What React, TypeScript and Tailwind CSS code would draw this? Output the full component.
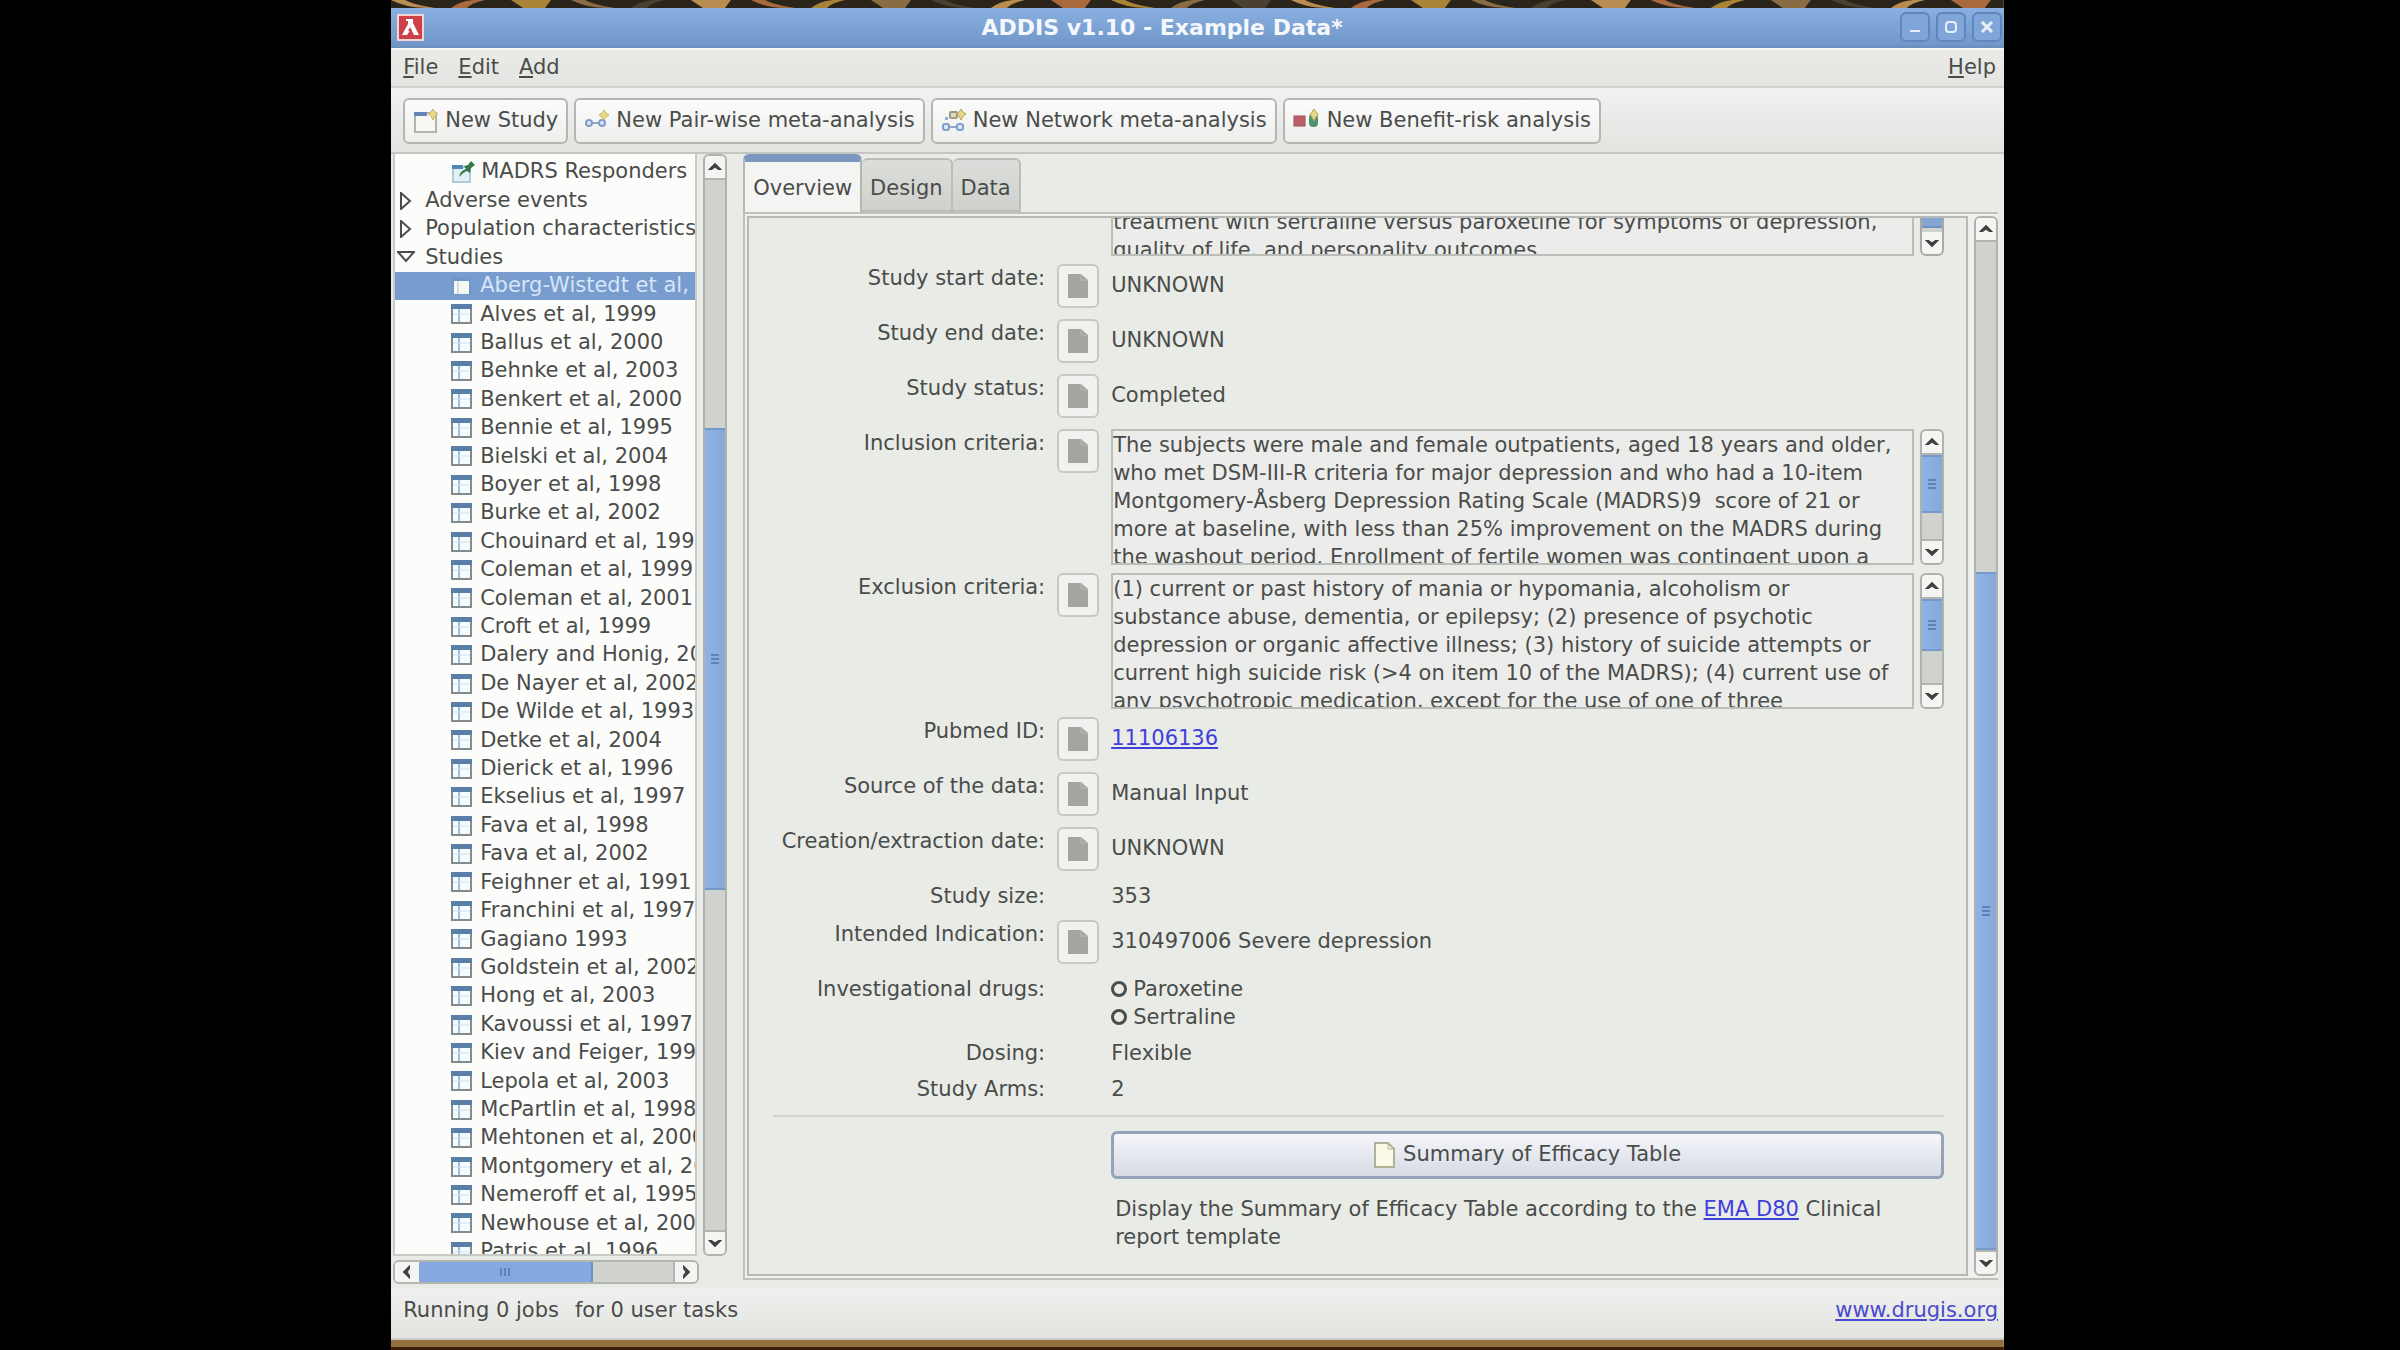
import React from "react";

type ScrollProps = { label: string; before: string; thumb: string; after: string };

function Chevron({ dir }: { dir: "up" | "down" | "left" | "right" }) {
  const d = {
    up: "M1 8 L6 3 L11 8 L9 8 L6 6 L3 8 Z",
    down: "M1 4 L6 9 L11 4 L9 4 L6 6 L3 4 Z",
    left: "M8 1 L3 6 L8 11 L8 9 L6 6 L8 3 Z",
    right: "M4 1 L9 6 L4 11 L4 9 L6 6 L4 3 Z",
  }[dir];
  return (
    <svg viewBox="0 0 12 12" className="h-3.5 w-3.5" aria-hidden="true">
      <path d={d} fill="#3f413f" stroke="#3f413f" strokeWidth="1" />
    </svg>
  );
}

function VScroll({ label, before, thumb, after }: ScrollProps) {
  return (
    <div aria-label={label} role="group" className="flex w-6 shrink-0 flex-col overflow-hidden rounded-md border-2 border-[#b0b2ae] bg-[#d0d2ce]">
      <button aria-label={`${label} up`} className="flex h-6 shrink-0 items-center justify-center border-b-2 border-[#b3b5b1] bg-[#f4f5f3]">
        <Chevron dir="up" />
      </button>
      <div className={before} />
      <div className={`${thumb} -mx-0.5 flex flex-col items-center justify-center gap-0.5 border-2 border-[#7599ca] bg-linear-to-r from-[#8fb3e6] to-[#86a9d8]`}>
        <span className="h-0.5 w-2 bg-[#5f83b8]" />
        <span className="h-0.5 w-2 bg-[#5f83b8]" />
        <span className="h-0.5 w-2 bg-[#5f83b8]" />
      </div>
      <div className={after} />
      <button aria-label={`${label} down`} className="flex h-6 shrink-0 items-center justify-center border-t-2 border-[#b3b5b1] bg-[#f4f5f3]">
        <Chevron dir="down" />
      </button>
    </div>
  );
}

function TableIcon() {
  return (
    <svg viewBox="0 0 21 20" className="h-5 w-[21px] shrink-0" aria-hidden="true">
      <rect x="1" y="1" width="19" height="18" fill="#f4fbff" stroke="#84898a" strokeWidth="2" />
      <rect x="0" y="0" width="21" height="5" fill="#5a7fa6" />
      <path d="M8 5 V18" stroke="#9cc0dc" strokeWidth="2" />
      <path d="M2 10 H19" stroke="#cfe3f0" strokeWidth="1" />
    </svg>
  );
}

function SelectedTableIcon() {
  return (
    <svg viewBox="0 0 21 20" className="h-5 w-[21px] shrink-0" aria-hidden="true">
      <rect x="1" y="1" width="19" height="18" fill="#6f97c8" />
      <rect x="3" y="5" width="15" height="13" fill="#f6faf4" />
      <path d="M7 5 V18" stroke="#a9c4d8" strokeWidth="1" />
    </svg>
  );
}

function ResponderIcon() {
  return (
    <svg viewBox="0 0 26 24" className="h-6 w-[26px] shrink-0" aria-hidden="true">
      <rect x="2" y="7" width="17" height="15" fill="#dff0f7" stroke="#b3c9da" strokeWidth="2" />
      <rect x="1" y="5" width="11" height="4" fill="#4f86b5" />
      <path d="M8 17 C9 12 12 10 15 9 L13 6 L17 5 L20 1 L24 5 L20 8 L19 13 L16 11 C13 12 11 14 8 17 Z" fill="#35784a" />
    </svg>
  );
}

function NewStudyIcon() {
  return (
    <svg viewBox="0 0 26 26" className="h-[26px] w-[26px]" aria-hidden="true">
      <rect x="2" y="5" width="21" height="19" fill="#f7f8f4" stroke="#b3b4a9" strokeWidth="2" />
      <rect x="1" y="4" width="13" height="4" fill="#6585bd" />
      <path d="M20 1 L22 4 L25 6 L22 8 L20 12 L18 8 L15 6 L18 4 Z" fill="#e6d885" stroke="#c9b769" strokeWidth="1" />
    </svg>
  );
}

function PairIcon() {
  return (
    <svg viewBox="0 0 26 26" className="h-[26px] w-[26px]" aria-hidden="true">
      <path d="M8 15 H16" stroke="#8fa6c6" strokeWidth="2" />
      <circle cx="5" cy="15" r="3" fill="#dbe8f6" stroke="#7f9ecb" strokeWidth="2" />
      <circle cx="18" cy="15" r="3" fill="#dbe8f6" stroke="#7f9ecb" strokeWidth="2" />
      <path d="M20 2 L22 5 L25 7 L22 9 L20 12 L18 9 L15 7 L18 5 Z" fill="#e6d885" stroke="#c9b769" strokeWidth="1" />
    </svg>
  );
}

function NetworkIcon() {
  return (
    <svg viewBox="0 0 26 26" className="h-[26px] w-[26px]" aria-hidden="true">
      <path d="M7 19 H17" stroke="#8fa6c6" strokeWidth="2" />
      <rect x="2" y="16" width="6" height="6" rx="2" fill="#dbe8f6" stroke="#7f9ecb" strokeWidth="2" />
      <rect x="16" y="16" width="6" height="6" rx="2" fill="#dbe8f6" stroke="#7f9ecb" strokeWidth="2" />
      <rect x="4" y="9" width="3" height="3" fill="#8fb0da" />
      <rect x="9" y="4" width="7" height="6" rx="1" fill="#d9d9c4" stroke="#9c9a80" strokeWidth="2" />
      <path d="M20 1 L22 4 L25 6 L22 8 L20 12 L18 8 L16 6 L18 4 Z" fill="#e6d885" stroke="#b5a45c" strokeWidth="1" />
    </svg>
  );
}

function BenefitIcon() {
  return (
    <svg viewBox="0 0 28 26" className="h-[26px] w-7" aria-hidden="true">
      <rect x="1" y="8" width="11" height="10" fill="#bb6068" stroke="#9d4d55" strokeWidth="1" />
      <rect x="16" y="6" width="9" height="13" rx="4" fill="#4f9470" />
      <path d="M21 1 L23 4 L25 6 L23 9 L21 13 L19 9 L17 6 L19 4 Z" fill="#e6d885" stroke="#b5a45c" strokeWidth="1" />
    </svg>
  );
}

function DocIcon() {
  return (
    <svg viewBox="0 0 20 24" className="h-6 w-5" aria-hidden="true">
      <path d="M0 0 H13 L20 6 V24 H0 Z" fill="#a3a5a1" />
      <path d="M13 0 V6 H20" fill="none" stroke="#b9bbb7" strokeWidth="1" />
    </svg>
  );
}

function PageIcon() {
  return (
    <svg viewBox="0 0 21 26" className="h-[26px] w-[21px]" aria-hidden="true">
      <path d="M1 1 H14 L20 7 V25 H1 Z" fill="#fbfae6" stroke="#b2b195" strokeWidth="2" />
      <path d="M14 1 V7 H20" fill="none" stroke="#b2b195" strokeWidth="1" />
    </svg>
  );
}

function Wallpaper({ bottom }: { bottom?: boolean }) {
  const xs = Array.from({ length: 27 }, (_, i) => i * 60);
  return (
    <svg viewBox="0 0 1613 10" preserveAspectRatio="none" className={bottom ? "h-2.5 w-full shrink-0" : "h-2 w-full shrink-0"} aria-hidden="true">
      <rect width="1613" height="10" fill={bottom ? "#94703f" : "#2b241b"} />
      {!bottom &&
        xs.map((x, i) => (
          <path
            key={x}
            d={i % 3 === 0 ? `M${x} 0 q14 9 34 10 l10 0 q-22 -4 -30 -10 Z` : i % 3 === 1 ? `M${x} 10 q8 -8 22 -10 h12 q-14 4 -18 10 Z` : `M${x} 0 h40 l-6 10 h-22 Z`}
            fill={["#b98d52", "#a8693c", "#a98438", "#8a6c42", "#4a4030"][i % 5]}
          />
        ))}
      {bottom && <rect y="7" width="1613" height="3" fill="#3d1d0c" />}
    </svg>
  );
}

const studies = [
  "Alves et al, 1999", "Ballus et al, 2000", "Behnke et al, 2003", "Benkert et al, 2000", "Bennie et al, 1995",
  "Bielski et al, 2004", "Boyer et al, 1998", "Burke et al, 2002", "Chouinard et al, 1999", "Coleman et al, 1999",
  "Coleman et al, 2001", "Croft et al, 1999", "Dalery and Honig, 2003", "De Nayer et al, 2002", "De Wilde et al, 1993",
  "Detke et al, 2004", "Dierick et al, 1996", "Ekselius et al, 1997", "Fava et al, 1998", "Fava et al, 2002",
  "Feighner et al, 1991", "Franchini et al, 1997", "Gagiano 1993", "Goldstein et al, 2002", "Hong et al, 2003",
  "Kavoussi et al, 1997", "Kiev and Feiger, 1997", "Lepola et al, 2003", "McPartlin et al, 1998",
  "Mehtonen et al, 2000", "Montgomery et al, 2004", "Nemeroff et al, 1995", "Newhouse et al, 2000", "Patris et al, 1996",
];

const inclusion = `The subjects were male and female outpatients, aged 18 years and older,
who met DSM-III-R criteria for major depression and who had a 10-item
Montgomery-Åsberg Depression Rating Scale (MADRS)9  score of 21 or
more at baseline, with less than 25% improvement on the MADRS during
the washout period. Enrollment of fertile women was contingent upon a`;

const exclusion = `(1) current or past history of mania or hypomania, alcoholism or
substance abuse, dementia, or epilepsy; (2) presence of psychotic
depression or organic affective illness; (3) history of suicide attempts or
current high suicide risk (>4 on item 10 of the MADRS); (4) current use of
any psychotropic medication, except for the use of one of three`;

function Branch({ open, children }: { open?: boolean; children: React.ReactNode }) {
  return (
    <li className="flex items-center gap-2.5 pl-0.5 whitespace-nowrap">
      <svg viewBox="0 0 18 18" className="h-[18px] w-[18px] shrink-0" aria-hidden="true">
        <path d={open ? "M1 4 H17 L9 13 Z" : "M4 1 L13 9 L4 17 Z"} fill="#fdfdfc" stroke="#4b4d4b" strokeWidth="2" />
      </svg>
      {children}
    </li>
  );
}

function ToolButton({ icon, children }: { icon: React.ReactNode; children: React.ReactNode }) {
  return (
    <button className="flex h-[46px] items-center gap-1.5 rounded-md border-2 border-[#b4b6b2] bg-linear-to-b from-[#fbfbfb] to-[#eeefed] px-2 whitespace-nowrap">
      {icon}
      {children}
    </button>
  );
}

function NoteButton({ label }: { label: string }) {
  return (
    <button aria-label={`Notes for ${label}`} className="flex h-11 w-[42px] items-center justify-center rounded-md border-2 border-[#c6c8c4] bg-[#f1f2f0]">
      <DocIcon />
    </button>
  );
}

function Row({ label, children }: { label: string; children: React.ReactNode }) {
  return (
    <div className="col-span-3 grid grid-cols-subgrid">
      <dt className="text-right leading-7 whitespace-nowrap">{label}:</dt>
      <dd>
        <NoteButton label={label} />
      </dd>
      <dd className="flex min-w-0 items-center">{children}</dd>
    </div>
  );
}

function PlainRow({ label, children }: { label: string; children: React.ReactNode }) {
  return (
    <div className="col-span-3 grid grid-cols-subgrid leading-7">
      <dt className="text-right whitespace-nowrap">{label}:</dt>
      <dd />
      <dd>{children}</dd>
    </div>
  );
}

function CriteriaRow({ label, text, thumb }: { label: string; text: string; thumb: string }) {
  const id = label.split(" ")[0].toLowerCase();
  return (
    <div className="col-span-3 grid grid-cols-subgrid">
      <dt className="text-right leading-7">
        <label htmlFor={id}>{label}:</label>
      </dt>
      <dd>
        <NoteButton label={label} />
      </dd>
      <dd className="flex h-[136px] gap-1.5">
        <textarea
          id={id}
          readOnly
          value={text}
          className="min-w-0 flex-1 resize-none overflow-hidden border-2 border-[#bbbdb9] bg-[#ecedea] leading-7 whitespace-pre outline-none"
        />
        <VScroll label={label} before="" thumb={thumb} after="flex-1" />
      </dd>
    </div>
  );
}

function TitleButton({ label, children }: { label: string; children: React.ReactNode }) {
  return (
    <button aria-label={label} className="flex h-[30px] w-[30px] items-center justify-center rounded-md border-2 border-[#5f86bd] bg-[#80a5d8]">
      <svg viewBox="0 0 16 16" className="h-4 w-4" fill="none" stroke="#e6effa" strokeWidth="2" aria-hidden="true">
        {children}
      </svg>
    </button>
  );
}

export default function App() {
  return (
    <div className="h-screen overflow-hidden bg-black font-['DejaVu_Sans',sans-serif] text-[21px] text-[#4a4c4a]">
      <div className="mr-[16.5%] ml-[16.3%] flex h-full flex-col bg-[#e9ebe7]">
        <Wallpaper />
        <header className="flex h-10 shrink-0 items-center border-b-2 border-[#6a8fbe] bg-linear-to-b from-[#8aafe0] to-[#7097c9] pr-0.5 pl-1.5">
          <svg viewBox="0 0 27 27" className="h-[27px] w-[27px]" aria-hidden="true">
            <rect x="1" y="1" width="25" height="25" fill="#cd4249" stroke="#f3d5d8" strokeWidth="2" />
            <path d="M5 21 L11 10 V7 H9 V5 H16 V9 L22 21 H17 L14 15 L10 21 Z" fill="#fff" />
            <path d="M13 13 L11 17 H15 Z" fill="#cd4249" />
          </svg>
          <h1 className="flex-1 text-center text-[22px] font-bold text-[#f4f8fd]">ADDIS v1.10 - Example Data*</h1>
          <div className="flex gap-1.5">
            <TitleButton label="Minimize"><path d="M3 12 H13" /></TitleButton>
            <TitleButton label="Maximize"><rect x="3" y="3" width="10" height="10" rx="3" /></TitleButton>
            <TitleButton label="Close"><path d="M3 3 L13 13 M13 3 L3 13" strokeWidth="3" /></TitleButton>
          </div>
        </header>
        <nav className="flex h-10 shrink-0 items-center gap-5 border-t-2 border-b-2 border-t-[#f6f8f8] border-b-[#cfd1cd] bg-linear-to-b from-[#ebebe6] to-[#e3e5e2] pr-2 pl-3">
          <button><u>F</u>ile</button>
          <button><u>E</u>dit</button>
          <button><u>A</u>dd</button>
          <button className="ml-auto"><u>H</u>elp</button>
        </nav>
        <div className="flex h-[66px] shrink-0 items-center gap-1.5 border-b-2 border-[#c4c6c2] bg-linear-to-b from-[#f1f2f2] to-[#e2e4e0] px-3 pt-0.5">
          <ToolButton icon={<NewStudyIcon />}>New Study</ToolButton>
          <ToolButton icon={<PairIcon />}>New Pair-wise meta-analysis</ToolButton>
          <ToolButton icon={<NetworkIcon />}>New Network meta-analysis</ToolButton>
          <ToolButton icon={<BenefitIcon />}>New Benefit-risk analysis</ToolButton>
        </div>

        <div className="flex min-h-0 flex-1 gap-4 pr-1.5 pl-0.5">
          <aside className="flex w-[334px] shrink-0 flex-col gap-1">
            <div className="flex min-h-0 flex-1 gap-1.5">
              <div className="min-w-0 flex-1 overflow-hidden border-2 border-t-0 border-[#c9cbc7] bg-[#fcfdfb]">
                <ul className="grid h-[calc(100%+12px)] auto-rows-fr pt-1">
                  <li className="flex items-center gap-1 pl-14 whitespace-nowrap"><ResponderIcon />MADRS Responders</li>
                  <Branch>Adverse events</Branch>
                  <Branch>Population characteristics</Branch>
                  <Branch open>Studies</Branch>
                  <li className="flex items-center gap-2 bg-[#779ccd] pl-14 whitespace-nowrap text-[#d6e5f8]"><SelectedTableIcon />Aberg-Wistedt et al, 2000</li>
                  {studies.map((s) => (
                    <li key={s} className="flex items-center gap-2 pl-14 whitespace-nowrap"><TableIcon />{s}</li>
                  ))}
                </ul>
              </div>
              <VScroll label="Tree scroll" before="h-[248px]" thumb="h-[462px]" after="flex-1" />
            </div>
            <div className="mr-7 flex h-6 overflow-hidden rounded-md border-2 border-[#b3b5b1] bg-[#d0d2ce]">
              <button aria-label="Scroll left" className="flex w-6 items-center justify-center bg-[#f4f5f3]"><Chevron dir="left" /></button>
              <div className="flex w-[174px] items-center justify-center gap-0.5 border-r-2 border-[#6f94c4] bg-[#84a9de]">
                <span className="h-2 w-0.5 bg-[#5f83b8]" />
                <span className="h-2 w-0.5 bg-[#5f83b8]" />
                <span className="h-2 w-0.5 bg-[#5f83b8]" />
              </div>
              <div className="flex-1" />
              <button aria-label="Scroll right" className="flex w-6 items-center justify-center border-l-2 border-[#b3b5b1] bg-[#f4f5f3]"><Chevron dir="right" /></button>
            </div>
          </aside>

          <main className="flex min-w-0 flex-1 flex-col pb-1">
            <div role="tablist" className="flex h-[58px] shrink-0 items-end">
              <button role="tab" aria-selected="true" className="h-full rounded-t-md border-2 border-t-8 border-b-0 border-[#b4b6b2] border-t-[#7c98bf] bg-[#f4f5f3] px-2 pt-1">Overview</button>
              <button role="tab" aria-selected="false" className="h-[54px] rounded-t-md border-2 border-l-0 border-[#bbbdb9] bg-linear-to-b from-[#dcdedb] to-[#cfd1cd] px-2 pt-2">Design</button>
              <button role="tab" aria-selected="false" className="h-[54px] rounded-t-md border-2 border-l-0 border-[#bbbdb9] bg-linear-to-b from-[#dcdedb] to-[#cfd1cd] px-2 pt-2">Data</button>
            </div>
            <div className="flex min-h-0 flex-1 gap-1.5 border-2 border-r-0 border-[#bfc1bd] bg-[#f0f1ef] p-0.5 pr-0">
              <section className="min-w-0 flex-1 overflow-hidden border-2 border-[#b7b9b5] bg-[#e9ebe7] pr-[22px] pl-6">
                <dl className="grid grid-cols-[272px_42px_1fr] gap-x-3">
                  <dt className="col-span-2" />
                  <dd className="mb-2 flex h-[38px] gap-1.5">
                    <div className="flex-1 overflow-hidden border-2 border-t-0 border-[#bbbdb9] bg-[#ecedea] leading-7 whitespace-nowrap">
                      <p className="-mt-2.5">treatment with sertraline versus paroxetine for symptoms of depression,</p>
                      <p>quality of life, and personality outcomes.</p>
                    </div>
                    <div className="flex w-6 flex-col overflow-hidden rounded-b-md border-2 border-t-0 border-[#a9aba7] bg-[#d0d2ce]">
                      <div className="-mx-0.5 h-2.5 border-b-2 border-[#6f94c4] bg-[#86a6d2]" />
                      <div className="flex-1" />
                      <button aria-label="Scroll down" className="flex h-[22px] items-center justify-center bg-[#f4f5f3]"><Chevron dir="down" /></button>
                    </div>
                  </dd>
                  <div className="col-span-3 grid grid-cols-subgrid gap-y-[11px]">
                    <Row label="Study start date">UNKNOWN</Row>
                    <Row label="Study end date">UNKNOWN</Row>
                    <Row label="Study status">Completed</Row>
                  </div>
                  <div className="col-span-3 mt-[11px] mb-2 grid grid-cols-subgrid gap-y-2">
                    <CriteriaRow label="Inclusion criteria" text={inclusion} thumb="h-[58px]" />
                    <CriteriaRow label="Exclusion criteria" text={exclusion} thumb="h-[52px]" />
                  </div>
                  <div className="col-span-3 grid grid-cols-subgrid gap-y-[11px]">
                    <Row label="Pubmed ID"><a href="#pubmed" className="text-[#3f3fdc] underline">11106136</a></Row>
                    <Row label="Source of the data">Manual Input</Row>
                    <Row label="Creation/extraction date">UNKNOWN</Row>
                    <PlainRow label="Study size">353</PlainRow>
                  </div>
                  <div className="col-span-3 mt-2.5 mb-[11px] grid grid-cols-subgrid">
                    <Row label="Intended Indication">310497006 Severe depression</Row>
                  </div>
                  <div className="col-span-3 grid grid-cols-subgrid gap-y-2">
                    <PlainRow label="Investigational drugs">
                      <ul>
                        {["Paroxetine", "Sertraline"].map((d) => (
                          <li key={d} className="flex items-center gap-1.5">
                            <span className="h-4 w-4 rounded-full border-[3px] border-[#4b4d4b]" />
                            {d}
                          </li>
                        ))}
                      </ul>
                    </PlainRow>
                    <PlainRow label="Dosing">Flexible</PlainRow>
                    <PlainRow label="Study Arms">2</PlainRow>
                  </div>
                </dl>
                <hr className="mt-3 border-t-2 border-[#d2d4d0]" />
                <div className="mt-3.5 ml-[338px]">
                  <button className="flex h-12 w-full items-center justify-center gap-2 rounded-md border-[3px] border-[#94a3b8] bg-linear-to-b from-[#f6f7fb] to-[#d5dae4]">
                    <PageIcon />
                    Summary of Efficacy Table
                  </button>
                  <p className="mt-4 pl-1 leading-7">
                    Display the Summary of Efficacy Table according to the <a href="#d80" className="text-[#3f3fdc] underline">EMA D80</a> Clinical
                    <br />
                    report template
                  </p>
                </div>
              </section>
              <VScroll label="Overview scroll" before="h-[330px]" thumb="h-[678px]" after="flex-1" />
            </div>
          </main>
        </div>

        <footer className="mt-1 flex h-[52px] shrink-0 items-center border-b-2 border-[#c9cbc7] bg-linear-to-b from-[#f0f1ef] to-[#e2e4df] pr-1.5 pb-1 pl-3">
          <span>Running 0 jobs</span>
          <span className="ml-4">for 0 user tasks</span>
          <a href="#drugis" className="ml-auto text-[#4a4ad0] underline">www.drugis.org</a>
        </footer>
        <Wallpaper bottom />
      </div>
    </div>
  );
}
